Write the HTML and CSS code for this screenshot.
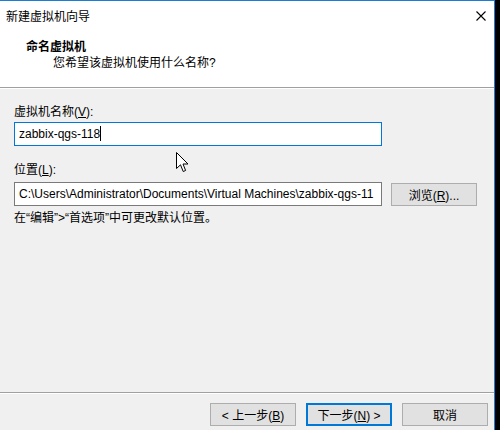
FILE: index.html
```html
<!DOCTYPE html>
<html lang="zh-CN">
<head>
    <meta charset="UTF-8">
    <title>新建虚拟机向导</title>
    <link rel="stylesheet" href="styles.css">
</head>
<body>
    <div class="window">
        <div class="titlebar">
            <span class="title">新建虚拟机向导</span>
            <span class="close">
                <svg width="10" height="10" viewBox="0 0 10 10">
                    <path d="M0.5 0.5 L9.5 9.5 M9.5 0.5 L0.5 9.5" stroke="#000" stroke-width="1.1" fill="none"/>
                </svg>
            </span>
        </div>

        <div class="header">
            <div class="header-title">命名虚拟机</div>
            <div class="header-sub">您希望该虚拟机使用什么名称?</div>
        </div>

        <div class="content">
            <div class="label">虚拟机名称(<u>V</u>):</div>
            <div class="field focused">zabbix-qgs-118<span class="caret"></span></div>

            <div class="label second">位置(<u>L</u>):</div>
            <div class="row">
                <div class="field">C:\Users\Administrator\Documents\Virtual Machines\zabbix-qgs-11</div>
                <button class="btn browse">浏览(<u>R</u>)...</button>
            </div>

            <div class="hint">在“编辑”&gt;“首选项”中可更改默认位置。</div>
        </div>

        <div class="footer">
            <button class="btn">&lt; 上一步(<u>B</u>)</button>
            <button class="btn default">下一步(<u>N</u>) &gt;</button>
            <button class="btn">取消</button>
        </div>

        <!-- mouse pointer -->
        <svg class="pointer" width="13" height="21" viewBox="0 0 13 21">
            <path d="M0.5 0.5 L0.5 16.5 L4.5 12.8 L7.2 19.5 L9.6 18.5 L7 12 L12 12 Z" fill="#fff" stroke="#000" stroke-width="1" stroke-linejoin="round"/>
        </svg>
    </div>
</body>
</html>
```

FILE: styles.css
```css
html, body {
    margin: 0;
    padding: 0;
    height: 100%;
}

body {
    background: #000;
    font-family: "Liberation Sans", "Noto Sans CJK SC", sans-serif;
    font-size: 12px;
    color: #000;
}

.window {
    width: 495px;
    height: 430px;
    box-sizing: border-box;
    background: #f0f0f0;
    border-top: 1px solid #1a7fd4;
    border-right: 1px solid #1a7fd4;
    display: flex;
    flex-direction: column;
    position: relative;
    overflow: hidden;
}

.titlebar {
    height: 29px;
    flex-shrink: 0;
    background: #fff;
    display: flex;
    align-items: center;
    justify-content: space-between;
    padding-left: 6px;
}

.close {
    width: 10px;
    height: 10px;
    margin-right: 8px;
    display: flex;
}

.header {
    height: 58px;
    flex-shrink: 0;
    box-sizing: border-box;
    background: #fff;
    padding: 9px 0 0 26px;
    border-bottom: 1px solid #a0a0a0;
    line-height: 16px;
}

.header-title {
    font-weight: bold;
}

.header-sub {
    padding-left: 27px;
}

.content {
    flex: 1;
    border-top: 1px solid #fff;
    padding: 15px 14px 0 14px;
    line-height: 16px;
}

.label {
    margin-bottom: 2px;
}

.label.second {
    margin-top: 16px;
    margin-bottom: 4px;
}

.field {
    width: 368px;
    height: 24px;
    box-sizing: border-box;
    background: #fff;
    border: 1px solid #7a7a7a;
    padding: 0 4px;
    line-height: 22px;
    white-space: nowrap;
    overflow: hidden;
}

.field.focused {
    border-color: #0078d7;
}

.caret {
    display: inline-block;
    width: 1px;
    height: 15px;
    background: #000;
    vertical-align: -3px;
}

.row {
    display: flex;
    align-items: center;
}

.hint {
    margin-top: 4px;
}

.btn {
    width: 86px;
    height: 23px;
    padding: 0;
    background: #e1e1e1;
    border: 1px solid #adadad;
    font-family: "Liberation Sans", "Noto Sans CJK SC", sans-serif;
    font-size: 12px;
    color: #000;
}

.btn.default {
    border-color: #0078d7;
    box-shadow: inset 0 0 0 1px #0078d7;
}

.browse {
    margin-left: 9px;
}

.footer {
    height: 38px;
    flex-shrink: 0;
    box-sizing: border-box;
    border-top: 1px solid #a0a0a0;
    box-shadow: inset 0 1px 0 #fff;
    padding: 10px 6px 0 0;
    display: flex;
    justify-content: flex-end;
    align-items: flex-start;
    gap: 10px;
}

.pointer {
    position: absolute;
    left: 176px;
    top: 151px;
}
```
